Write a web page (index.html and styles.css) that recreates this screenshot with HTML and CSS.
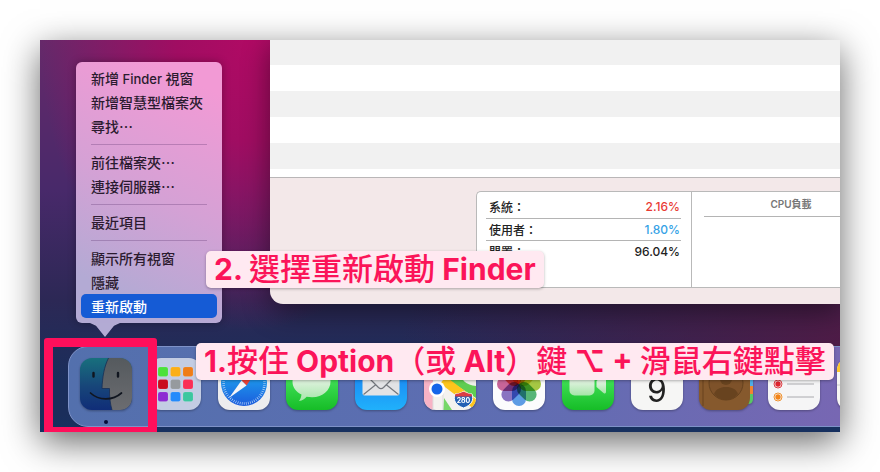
FILE: index.html
```html
<!DOCTYPE html>
<html lang="zh-Hant">
<head>
<meta charset="utf-8">
<title>重新啟動 Finder</title>
<link rel="stylesheet" href="styles.css">
</head>
<body>
<main class="desktop">
  <section class="window">
    <div class="process-list"></div>
    <div class="summary">
      <div class="usage">
        <table class="stats">
          <tr><th scope="row">系統：</th><td class="red">2.16%</td></tr>
          <tr><th scope="row">使用者：</th><td class="blue">1.80%</td></tr>
          <tr><th scope="row">閒置：</th><td>96.04%</td></tr>
        </table>
        <div class="load"><h2>CPU負載</h2></div>
      </div>
    </div>
  </section>

  <nav class="dock">
    <button class="app" aria-label="Finder">
      <svg viewBox="0 0 52 52">
        <defs>
          <linearGradient id="fa" x2="0" y2="1"><stop stop-color="#18707d"/><stop offset=".55" stop-color="#174579"/><stop offset="1" stop-color="#102d78"/></linearGradient>
          <linearGradient id="fb" x2="0" y2="1"><stop stop-color="#555a5e"/><stop offset="1" stop-color="#6b6c70"/></linearGradient>
          <clipPath id="r"><rect width="52" height="52" rx="12"/></clipPath>
        </defs>
        <g clip-path="url(#r)">
          <rect width="52" height="52" fill="url(#fa)"/>
          <path d="M28.500 0C24 9 22.500 19 22 30.500h7.500c-.2 7 .5 15 2.500 21.500h20V0z" fill="url(#fb)"/>
          <path d="M28.500 0C24 9 22.500 19 22 30.500h7.500c-.2 7 .5 15 2.500 21.500" fill="none" stroke="#182f55" stroke-width=".8"/>
        </g>
        <path d="M13.500 15v3.500M38 15v3.500" stroke="#10151f" stroke-width="2.400" stroke-linecap="round"/>
        <path d="M10.500 35c8 7.500 22 8 31 0" fill="none" stroke="#10151f" stroke-width="1.700" stroke-linecap="round"/>
      </svg>
    </button>
    <button class="app" aria-label="啟動台">
      <svg viewBox="0 0 52 52">
        <rect width="52" height="52" rx="12" fill="#c3cce3"/>
        <g stroke="#fff" stroke-opacity=".2" stroke-width=".5">
        <rect x="9" y="9" width="10" height="9.500" rx="2" fill="#4be13b"/><rect x="21.500" y="9" width="10" height="9.500" rx="2" fill="#fbaf18"/><rect x="34" y="9" width="10" height="9.500" rx="2" fill="#ef7d18"/>
        <rect x="9" y="21.500" width="10" height="9.500" rx="2" fill="#c90c1d"/><rect x="21.500" y="21.500" width="10" height="9.500" rx="2" fill="#969a9e"/><rect x="34" y="21.500" width="10" height="9.500" rx="2" fill="#fa2e55"/>
        <rect x="9" y="34" width="10" height="9.500" rx="2" fill="#8d2bd2"/><rect x="21.500" y="34" width="10" height="9.500" rx="2" fill="#248afb"/><rect x="34" y="34" width="10" height="9.500" rx="2" fill="#3bc79f"/>
        </g>
      </svg>
    </button>
    <button class="app" aria-label="Safari">
      <svg viewBox="0 0 52 52">
        <defs><linearGradient id="sa" x2="0" y2="1"><stop stop-color="#1fc0f7"/><stop offset="1" stop-color="#1b5bdc"/></linearGradient></defs>
        <rect width="52" height="52" rx="12" fill="#ececee"/>
        <circle cx="26" cy="25" r="23" fill="url(#sa)"/>
        <circle cx="26" cy="25" r="20.500" fill="none" stroke="#cfe4fb" stroke-width="2.600" stroke-dasharray=".6 1.500"/>
        <path d="M41 9L23.500 22.500l5 5z" fill="#ee4238"/>
        <path d="M11 40l12.500-17.500 5 5z" fill="#f5f5f7"/>
      </svg>
    </button>
    <button class="app" aria-label="訊息">
      <svg viewBox="0 0 52 52">
        <defs><linearGradient id="ga" x2="0" y2="1"><stop stop-color="#5df777"/><stop offset="1" stop-color="#16bd27"/></linearGradient>
        <linearGradient id="gb" x2="0" y2="1"><stop stop-color="#fff"/><stop offset=".5" stop-color="#d6f0d6"/><stop offset="1" stop-color="#a5e5a8"/></linearGradient></defs>
        <rect width="52" height="52" rx="12" fill="url(#ga)"/>
        <path d="M26 8C15 8 6.500 14.500 6.500 23.500c0 6 3.500 10.500 9 13-.3 2.500-1 4.500-2.500 6.500 3.500-.4 5.800-2 7.600-4.300 1.700.3 3.500.5 5.400.5 11 0 18.500-7 18.500-15.700S37 8 26 8z" fill="url(#gb)"/>
      </svg>
    </button>
    <button class="app" aria-label="郵件">
      <svg viewBox="0 0 52 52">
        <defs><linearGradient id="ma" x2="0" y2="1"><stop stop-color="#1875f0"/><stop offset="1" stop-color="#20b1fb"/></linearGradient></defs>
        <rect width="52" height="52" rx="12" fill="url(#ma)"/>
        <rect x="7.500" y="13" width="37" height="24.500" rx="2" fill="#e2e3e5"/>
        <path d="M8 14l15.500 15.500q2.500 2.300 5 0L44 14M8.500 36.500L21 26.500M43.500 36.500L31 26.500" fill="none" stroke="#73777d" stroke-width="1.200"/>
      </svg>
    </button>
    <button class="app" aria-label="地圖">
      <svg viewBox="0 0 52 52">
        <g clip-path="url(#r)">
          <rect width="52" height="52" fill="#f4f2ef"/>
          <path d="M0 22h9v30H0z" fill="#f7b3c5"/>
          <path d="M24 22l28 18V0H20z" fill="#5fcd52"/>
          <path d="M36 14c1 8 6 13 16 14V14z" fill="#edf0e8"/>
          <path d="M19 22l33 25" stroke="#fdc51c" stroke-width="9"/>
          <path d="M20 40l8 12h-9z" fill="#76d767"/>
          <path d="M9 30v22M19 30v22" stroke="#ddd" stroke-width="1"/>
        </g>
        <circle cx="13" cy="31" r="8" fill="#fff"/><circle cx="13" cy="31" r="5.500" fill="#1465e9"/>
        <path d="M31 36c3 0 5.500-1 8.500-2.500C42.500 35 45 36 48 36c2 6 0 11-8.500 14-8.500-3-10.500-8-8.500-14z" fill="#2360b4" stroke="#fff" stroke-width="1"/>
        <path d="M31.500 36c3 0 5-1 8-2.200 3 1.200 5 2.200 8 2.200l.5 2.500H31z" fill="#dc3c43"/>
        <text x="39.500" y="45" text-anchor="middle" class="shield">280</text>
      </svg>
    </button>
    <button class="app" aria-label="照片">
      <svg viewBox="0 0 52 52">
        <rect width="52" height="52" rx="12" fill="#fcfcfd"/>
        <g class="petals">
          <rect x="19" y="4" width="14" height="22" rx="7" fill="#f8a033"/>
          <rect x="19" y="4" width="14" height="22" rx="7" fill="#e8d33d" transform="rotate(45 26 26)"/>
          <rect x="19" y="4" width="14" height="22" rx="7" fill="#a7ca43" transform="rotate(90 26 26)"/>
          <rect x="19" y="4" width="14" height="22" rx="7" fill="#58b779" transform="rotate(135 26 26)"/>
          <rect x="19" y="4" width="14" height="22" rx="7" fill="#5e9ee6" transform="rotate(180 26 26)"/>
          <rect x="19" y="4" width="14" height="22" rx="7" fill="#8c75c3" transform="rotate(225 26 26)"/>
          <rect x="19" y="4" width="14" height="22" rx="7" fill="#cb6699" transform="rotate(270 26 26)"/>
          <rect x="19" y="4" width="14" height="22" rx="7" fill="#ee6751" transform="rotate(315 26 26)"/>
        </g>
      </svg>
    </button>
    <button class="app" aria-label="FaceTime">
      <svg viewBox="0 0 52 52">
        <rect width="52" height="52" rx="12" fill="url(#ga)"/>
        <rect x="7.500" y="14" width="25" height="23.500" rx="5" fill="url(#gb)"/>
        <path d="M34.500 23l7-6q2.500-1.500 2.500 1.500v15q0 3-2.500 1.500l-7-6z" fill="url(#gb)"/>
      </svg>
    </button>
    <button class="app" aria-label="行事曆">
      <svg viewBox="0 0 52 52">
        <rect width="52" height="52" rx="12" fill="#f6f6f5"/>
        <path d="M0 14V12A12 12 0 0 1 12 0h28a12 12 0 0 1 12 12v2z" fill="#f34b43"/>
        <text x="26" y="43.500" text-anchor="middle" class="date">9</text>
      </svg>
    </button>
    <button class="app" aria-label="聯絡資訊">
      <svg viewBox="0 0 52 52">
        <path d="M46 12h8v11h-8z" fill="#a9a9ac"/><path d="M46 20h6q2 0 2 2v6h-8z" fill="#4eaee9"/><path d="M46 28h8v8h-8z" fill="#f18430"/><path d="M46 36h8v5q0 5-5 5h-3z" fill="#58c764"/>
        <rect width="51" height="52" rx="12" fill="#86592d"/>
        <path d="M4 4v44" stroke="#68431f" stroke-width="1"/>
        <circle cx="27" cy="25" r="17" fill="#7e522a" stroke="#66421f" stroke-width="1"/>
        <circle cx="27" cy="21" r="6" fill="#68431f"/><path d="M15 36c2-5 6-7 12-7s10 2 12 7c-7 8-17 8-24 0z" fill="#68431f"/>
      </svg>
    </button>
    <button class="app" aria-label="提醒事項">
      <svg viewBox="0 0 52 52">
        <rect width="52" height="52" rx="12" fill="#f5f5f6"/>
        <path d="M19 13h27M19 26h27M19 39h27" stroke="#aaaaae" stroke-width="1"/>
        <g fill="none"><circle cx="10" cy="13" r="4" stroke="#1b83f6"/><circle cx="10" cy="26" r="4" stroke="#df3e43"/><circle cx="10" cy="39" r="4" stroke="#ef922f"/></g>
        <circle cx="10" cy="13" r="2.700" fill="#1b83f6"/><circle cx="10" cy="26" r="2.700" fill="#df252f"/><circle cx="10" cy="39" r="2.700" fill="#f28418"/>
      </svg>
    </button>
    <button class="app" aria-label="備忘錄">
      <svg viewBox="0 0 52 52">
        <rect width="52" height="52" rx="12" fill="#f7f6f3"/>
        <path d="M0 14V12A12 12 0 0 1 12 0h28a12 12 0 0 1 12 12v2z" fill="#fdc62d"/>
        <path d="M0 27h52" stroke="#ccc" stroke-width="1"/>
      </svg>
    </button>
  </nav>

  <div class="menu">
    <button>新增<span class="latin"> Finder </span>視窗</button>
    <button>新增智慧型檔案夾</button>
    <button>尋找<span class="dots">…</span></button>
    <hr>
    <button>前往檔案夾<span class="dots">…</span></button>
    <button>連接伺服器<span class="dots">…</span></button>
    <hr>
    <button>最近項目</button>
    <hr>
    <button>顯示所有視窗</button>
    <button>隱藏</button>
    <button class="selected">重新啟動</button>
  </div>

  <div class="marker"></div>
  <p class="step step-two">2. <span class="han">選擇重新啟動</span> Finder</p>
  <p class="step step-one">1.<span class="han">按住</span> Option<span class="han">（或</span> Alt<span class="han">）鍵</span> ⌥ + <span class="han">滑鼠右鍵點擊</span></p>
</main>
</body>
</html>
```
FILE: styles.css
```css
* { box-sizing: border-box; }

body {
  margin: 0;
  padding: 40px;
  background: #fff;
  font-family: Inter, "Noto Sans CJK TC", sans-serif;
}

button {
  border: 0;
  padding: 0;
  background: none;
  font: inherit;
  color: inherit;
}

.desktop {
  position: relative;
  padding-bottom: 5px;
  overflow: hidden;
  box-shadow: 0 10px 34px rgba(0, 0, 0, 0.6);
  background:
    linear-gradient(#12305c00 375px, #17305f 388px),
    radial-gradient(ellipse 210px 290px at 210px 0, #b00a64 0, #a00d62 35%, #a00d6200 100%),
    radial-gradient(ellipse 500px 160px at 860px 300px, #541a45, #541a4500),
    linear-gradient(#66296a 0, #48296a 150px, #2c2855 260px, #1a2e5b 340px);
}

.window {
  margin-left: 230px;
  overflow: hidden;
  border-radius: 0 0 0 13px;
  background: #f3e8e9;
  box-shadow: 0 8px 28px rgba(0, 0, 0, 0.45);
}

.process-list {
  height: 138px;
  border-bottom: 1px solid #b9b6b7;
  background: repeating-linear-gradient(#f1f1f1 0 25px, #fff 25px 51px, #f1f1f1 51px 52px);
}

.summary { padding: 13px 0 16px 206px; }

.usage {
  display: flex;
  height: 97px;
  border: 1px solid #b9b9b9;
  border-right: 0;
  border-radius: 5px 0 0 5px;
  background: #fff;
}

.stats {
  flex: none;
  align-self: flex-start;
  width: 195px;
  margin: 4px 10px 0 9px;
  border-collapse: collapse;
  font-size: 12px;
  font-weight: 500;
  color: #222;
}

.stats tr { height: 22px; }
.stats tr + tr { border-top: 1px solid #b4b4b4; }

.stats th {
  padding: 0 3px;
  font-weight: 500;
  text-align: left;
}

.stats td {
  padding: 0 1px;
  text-align: right;
}

.stats .red { color: #e93a34; }
.stats .blue { color: #36a2e6; }

.load {
  flex: 1;
  padding-left: 12px;
  border-left: 1px solid #b9b9b9;
}

.load h2 {
  margin: 0;
  padding-left: 38px;
  border-bottom: 1px solid #b4b4b4;
  font-size: 10px;
  line-height: 24px;
  font-weight: 600;
  text-align: center;
  color: #777;
}

.dock {
  display: flex;
  justify-content: space-between;
  height: 81px;
  margin: 42px -50px 0 28px;
  padding: 11px 0 0 11px;
  border: 1px solid #7e92c8;
  border-radius: 20px;
  background: linear-gradient(90deg, #5370ad, #5f6db2 55%, #7b66b3);
}

.app {
  flex: none;
  width: 52px;
  height: 52px;
}

.app svg {
  display: block;
  overflow: visible;
  filter: drop-shadow(0 1px 1px rgba(0, 0, 0, 0.3));
}

.app:first-child::after {
  content: "";
  display: block;
  width: 4px;
  height: 4px;
  margin: 10px auto 0;
  border-radius: 50%;
  background: #050c38;
}

.petals rect { mix-blend-mode: multiply; }
.shield { font-size: 7px; font-weight: 700; fill: #fff; }
.date { font-size: 32px; fill: #222; font-weight: 400; }

.menu {
  position: absolute;
  top: 22px;
  left: 36px;
  width: 146px;
  padding: 4px 5px 5px;
  border-radius: 6px;
  background: linear-gradient(205deg, #f29ad5 10%, #d5a1d5 50%, #b3aad4 85%);
  box-shadow: 0 0 8px rgba(0, 0, 0, 0.3);
  font-size: 14px;
  font-weight: 500;
  color: #2b1b2f;
}

.menu::after {
  content: "";
  position: absolute;
  top: 100%;
  left: 14px;
  width: 30px;
  height: 14px;
  background: #b3abd4;
  clip-path: polygon(0 0, 100% 0, 80% 20%, 50% 100%, 20% 20%);
}

.menu button {
  display: block;
  width: 100%;
  height: 24px;
  padding: 0 10px;
  border-radius: 5px;
  line-height: 25px;
  text-align: left;
  white-space: nowrap;
}

.menu .selected {
  background: #155bd5;
  color: #fff;
}

.menu hr {
  height: 1px;
  margin: 6px 10px 5px;
  border: 0;
  background: rgba(90, 50, 110, 0.3);
}

.latin { font-size: 13px; }
.dots { font-family: "Noto Sans CJK TC", sans-serif; }

.marker {
  position: absolute;
  left: 4px;
  bottom: -4px;
  width: 113px;
  height: 98px;
  border: 9px solid #ff0f5b;
  border-radius: 3px;
}

.step {
  position: absolute;
  margin: 0;
  padding: 0 8px;
  border-radius: 5px;
  background: #ffe9f1;
  box-shadow: 0 1px 3px rgba(0, 0, 0, 0.3);
  font-size: 30px;
  line-height: 37px;
  font-weight: 700;
  white-space: nowrap;
  color: #fb1459;
}

.han {
  font-size: 31px;
  line-height: 1;
  font-weight: 500;
}

.step-two { top: 211px; left: 166px; }
.step-one { top: 303px; left: 156px; }
```
